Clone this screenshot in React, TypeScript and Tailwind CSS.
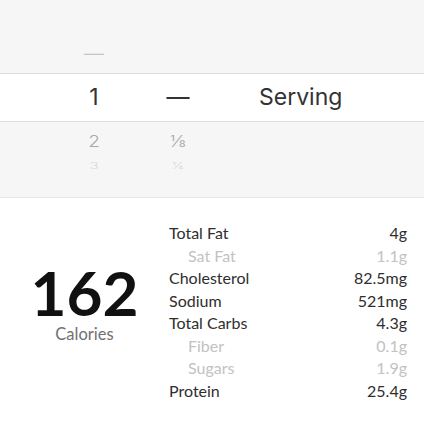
import React from 'react';

const nutrients = [
  { label: 'Total Fat', value: '4g' },
  { label: 'Sat Fat', value: '1.1g', sub: true },
  { label: 'Cholesterol', value: '82.5mg' },
  { label: 'Sodium', value: '521mg' },
  { label: 'Total Carbs', value: '4.3g' },
  { label: 'Fiber', value: '0.1g', sub: true },
  { label: 'Sugars', value: '1.9g', sub: true },
  { label: 'Protein', value: '25.4g' },
];

const PickerRow = ({ a, b, c, className, height }: { a: string; b: string; c?: string; className: string; height: string }) => (
  <div className={`flex items-center ${height} ${className}`}>
    <div className="w-[64px]" />
    <div className="w-[60px] text-center">{a}</div>
    <div className="w-[24px]" />
    <div className="w-[60px] text-center">{b}</div>
    <div className="w-[51px]" />
    <div>{c}</div>
  </div>
);

export default function App() {
  return (
    <div className="w-[424px] h-[424px] overflow-hidden bg-white font-['Inter',sans-serif]">
      {/* Serving picker */}
      <div className="bg-[#f6f6f6] h-[73px] flex flex-col justify-end pb-[7px]">
        <PickerRow a="—" b="" height="h-[24px]" className="text-[20px] text-[#c4c4c4] scale-y-75" />
      </div>
      <div className="border-y border-[#dedede] bg-white">
        <PickerRow a="1" b="—" c="Serving" height="h-[47px]" className="text-[23px] text-[#333]" />
      </div>
      <div className="bg-[#f6f6f6] h-[76px] border-b border-[#e6e6e6] flex flex-col pt-[6px]">
        <PickerRow a="2" b="⅛" height="h-[28px]" className="text-[19px] font-light text-[#a9a9a9] scale-y-[0.8]" />
        <PickerRow a="3" b="¼" height="h-[20px]" className="text-[15px] font-light text-[#d8d8d8] scale-y-[0.55]" />
      </div>

      {/* Nutrition summary */}
      <div className="flex font-['Lato',sans-serif]">
        <div className="w-[169px] flex flex-col items-center pt-[61px]">
          <div className="text-[62px] leading-[66px] font-bold text-[#111]">162</div>
          <div className="text-[16.5px] leading-[19px] text-[#707070]">Calories</div>
        </div>
        <div className="w-[238px] pt-[24px]">
          {nutrients.map((n) => (
            <div
              key={n.label}
              className={`flex justify-between text-[16px] leading-[22.5px] ${n.sub ? 'text-[#c2c2c2]' : 'text-[#2e2e2e]'}`}
            >
              <span className={n.sub ? 'pl-[19px]' : ''}>{n.label}</span>
              <span>{n.value}</span>
            </div>
          ))}
        </div>
      </div>
    </div>
  );
}
